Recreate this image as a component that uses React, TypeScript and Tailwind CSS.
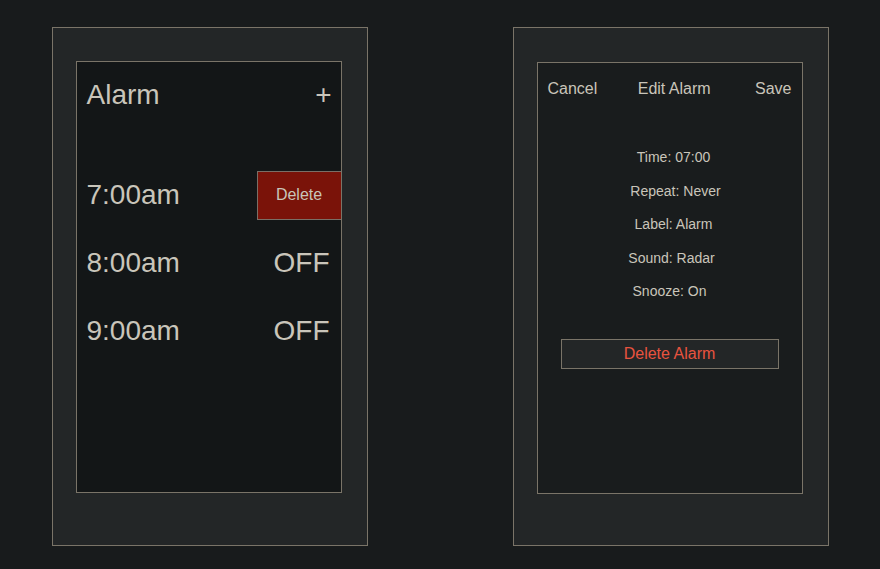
import React from "react";

const font = { fontFamily: '"Liberation Sans", Arial, sans-serif' };

function AlarmRow({ time, right }: { time: string; right: React.ReactNode }) {
  return (
    <div className="h-[68px] flex items-center justify-between pl-[10px]">
      <span className="text-[28px] leading-none">{time}</span>
      {right}
    </div>
  );
}

export default function App() {
  const details = [
    { t: "Time: 07:00", cls: "pl-[8px]" },
    { t: "Repeat: Never", cls: "pl-[12px]" },
    { t: "Label: Alarm", cls: "pl-[8px]" },
    { t: "Sound: Radar", cls: "pl-[4px]" },
    { t: "Snooze: On", cls: "pl-0" },
  ];
  return (
    <div className="min-h-[569px] bg-[#181b1c] flex justify-center gap-[145px] pt-[27px] text-[#c9c5ba]" style={font}>
      {/* Left phone */}
      <div className="w-[316px] h-[519px] border border-[#7a7468] bg-[#232627] pl-[23px] pt-[33px]">
        <div className="w-[266px] h-[432px] border border-[#7a7468] bg-[#131617] overflow-hidden flex flex-col">
          <div className="h-[66px] flex items-center justify-between pl-[10px] pr-[9px]">
            <span className="text-[28px] leading-none">Alarm</span>
            <span className="text-[28px] leading-none">+</span>
          </div>
          <div className="mt-[33px] flex flex-col">
            <AlarmRow
              time="7:00am"
              right={
                <button className="w-[84px] h-[49px] bg-[#7a1309] border-l border-t border-b border-[#7a6f66] text-[16px] text-[#c9c5ba]">
                  Delete
                </button>
              }
            />
            <div className="pr-[11px]">
              <AlarmRow time="8:00am" right={<span className="text-[28px] leading-none">OFF</span>} />
            </div>
            <div className="pr-[11px]">
              <AlarmRow time="9:00am" right={<span className="text-[28px] leading-none">OFF</span>} />
            </div>
          </div>
        </div>
      </div>

      {/* Right phone */}
      <div className="w-[316px] h-[519px] border border-[#7a7468] bg-[#232627] pl-[23px] pt-[34px]">
        <div className="w-[266px] h-[432px] border border-[#7a7468] bg-[#191c1d] flex flex-col">
          <div className="h-[51px] flex items-center justify-between px-[10px] text-[16px]">
            <span>Cancel</span>
            <span className="mr-[4px]">Edit Alarm</span>
            <span>Save</span>
          </div>
          <div className="mt-[27px] flex flex-col items-center text-[14px]">
            {details.map((d) => (
              <div key={d.t} className={`h-[33.5px] flex items-center justify-center ${d.cls}`}>
                {d.t}
              </div>
            ))}
          </div>
          <button className="mt-[30px] mx-auto w-[218px] h-[30px] border border-[#7a7468] bg-[#232627] text-[16px] text-[#e8533f]">
            Delete Alarm
          </button>
        </div>
      </div>
    </div>
  );
}
